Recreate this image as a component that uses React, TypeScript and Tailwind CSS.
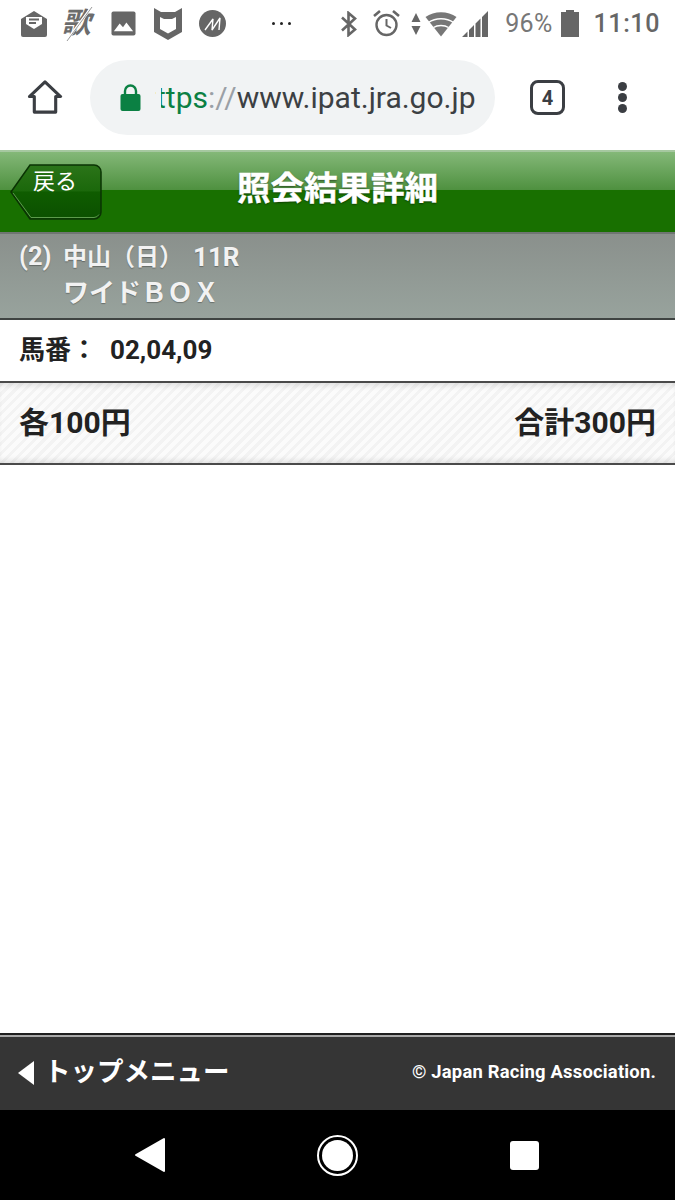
const sans = 'font-[Roboto,"Noto_Sans_CJK_JP",sans-serif]'

function StatusIcons() {
  return (
    <div className="flex items-center">
      {/* mail */}
      <svg width="28" height="28" viewBox="0 0 28 28" className="ml-[20px]">
        <path d="M14 1 L27 9 V25 a2 2 0 0 1-2 2 H3 a2 2 0 0 1-2-2 V9 Z" fill="#666" />
        <path d="M6 7 H22 V14 L14 19 L6 14 Z" fill="#fff" />
        <path d="M9 9.5 H19 M9 13 H16" stroke="#666" strokeWidth="1.8" />
      </svg>
      {/* music app badge */}
      <div className="relative ml-[15px] flex h-[36px] w-[32px] items-center justify-center">
        <span className="skew-x-[-14deg] text-[29px] leading-none font-bold text-[#6c6c6c]">歌</span>
        <svg width="32" height="36" viewBox="0 0 32 36" className="absolute top-0 left-0">
          <path d="M28 2 L4 34" stroke="#fff" strokeWidth="2.5" />
          <path d="M29 1 L4 35" stroke="#999" strokeWidth="1" />
        </svg>
      </div>
      {/* picture */}
      <svg width="25" height="25" viewBox="0 0 26 26" className="ml-[16px]">
        <rect x="0.5" y="0.5" width="25" height="25" rx="2" fill="#666" />
        <path d="M3 21 L9 13 L12.5 17 L16 12 L23 21 Z" fill="#fff" />
      </svg>
      {/* shield */}
      <svg width="28" height="32" viewBox="0 0 28 32" className="ml-[18px]">
        <path d="M0 0 L7 4 H21 L28 0 V24 L14 32 L0 24 Z" fill="#666" />
        <path d="M6 9 L10 11 H18 L22 9 V21 L14 25.500 L6 21 Z" fill="#fff" />
      </svg>
      {/* M badge */}
      <div className="ml-[17px] flex size-[27px] items-center justify-center rounded-full bg-[#666]">
        <svg width="18" height="14" viewBox="0 0 18 14" fill="none" stroke="#fff" strokeWidth="1.400" strokeLinejoin="bevel">
          <path d="M1 13 L9 2 L8 13 L16 1 L15 13" />
        </svg>
      </div>
      <div className="ml-[46px] flex gap-[5px]">
        <span className="size-[3px] rounded-full bg-[#222]" />
        <span className="size-[3px] rounded-full bg-[#222]" />
        <span className="size-[3px] rounded-full bg-[#222]" />
      </div>
    </div>
  )
}

function SystemIcons() {
  return (
    <div className="flex items-center">
      {/* bluetooth */}
      <svg width="18" height="26" viewBox="0 0 18 26" fill="none" stroke="#666" strokeWidth="2.600">
        <path d="M2 6.500 L15 18.500 L8.500 24 V2 L15 7.500 L2 19.500" />
      </svg>
      {/* alarm */}
      <svg width="27" height="27" viewBox="0 0 27 27" fill="none" stroke="#666" className="ml-[15px]">
        <circle cx="13.500" cy="15" r="10" strokeWidth="2.400" />
        <path d="M13.500 9 V15.500 L18 18" strokeWidth="2" />
        <path d="M1 6 L7 1 M26 6 L20 1" strokeWidth="2.600" />
      </svg>
      {/* data arrows */}
      <svg width="10" height="24" viewBox="0 0 9 24" fill="#666" className="ml-[11px]">
        <path d="M4.500 1 L9 10 H0 Z M0 14 H9 L4.500 23 Z" />
      </svg>
      {/* wifi: a solid fan cut by two white arcs */}
      <svg width="32" height="26" viewBox="0 0 32 26" fill="none" className="ml-[4px]">
        <path d="M0.500 6 C9 -0.500 23 -0.500 31.500 6 L16 25.500 Z" fill="#777" />
        <path d="M3.500 11.500 C10.500 6.500 21.500 6.500 28.500 11.500" stroke="#fff" strokeWidth="1.500" />
        <path d="M8.500 16.500 C12.500 13.800 19.500 13.800 23.500 16.500" stroke="#fff" strokeWidth="1.500" />
      </svg>
      {/* signal */}
      <svg width="27" height="26" viewBox="0 0 27 26" fill="#666" className="ml-[5px]">
        <path d="M0 26 L5.500 20.500 V26 Z M7 19 L12 14 V26 H7 Z M13.500 12.500 L18.500 7.500 V26 H13.500 Z M20 6 L26 0 V26 H20 Z" />
      </svg>
      <span className="ml-[16px] text-[25px] leading-none tracking-[0.3px] text-[#777]">96%</span>
      {/* battery */}
      <svg width="18" height="27" viewBox="0 0 18 27" fill="#666" className="ml-[8px]">
        <path d="M5 0 H13 V2 H18 V27 H0 V2 H5 Z" />
      </svg>
      <span className="ml-[15px] text-[25px] leading-none font-medium tracking-[0.6px] text-[#666]">11:10</span>
    </div>
  )
}

function Toolbar() {
  return (
    <div className="flex h-[103px] items-center pb-[2px]">
      <svg width="36" height="35" viewBox="0 0 36 36" fill="none" stroke="#3b3e43" strokeWidth="3.200" strokeLinejoin="round" className="ml-[27px]">
        <path d="M2 17 L18 2 L34 17 H29 V33 H7 V17 Z" />
      </svg>
      <div className="ml-[27px] flex h-[75px] w-[405px] items-center rounded-full bg-[#f1f3f4]">
        <svg width="21" height="30" viewBox="0 0 21 30" fill="none" className="ml-[30px]">
          <path d="M5 12 V8 a5.500 5.500 0 0 1 11 0 V12" stroke="#0b8043" strokeWidth="2.400" />
          <rect x="0.500" y="11" width="20" height="17" rx="2" fill="#0b8043" />
        </svg>
        {/* the address is scrolled, so the pill's colour lies over the front of the scheme */}
        <div className="relative ml-[15px] text-[30px] leading-[36px] whitespace-nowrap">
          <span className="text-[#0b8043]">ttps</span>
          <span className="text-[#9aa0a6]">://</span>
          <span className="text-[#3c4043]">www.ipat.jra.go.jp</span>
          <span className="absolute top-0 left-0 h-full w-[5px] bg-[#f1f3f4]" />
        </div>
      </div>
      <div className="ml-[35px] flex size-[35px] items-center justify-center rounded-[8px] border-[3px] border-[#3b3e43] text-[20px] leading-none font-bold text-[#3b3e43]">
        4
      </div>
      <div className="ml-[53px] flex flex-col gap-[2px]">
        <span className="size-[9px] rounded-full bg-[#3b3e43]" />
        <span className="size-[9px] rounded-full bg-[#3b3e43]" />
        <span className="size-[9px] rounded-full bg-[#3b3e43]" />
      </div>
    </div>
  )
}

function BackButton() {
  return (
    <div className="relative flex h-[56px] w-[92px] items-start">
      <svg width="92" height="56" viewBox="0 0 92 56" className="absolute top-0 left-0">
        <defs>
          <linearGradient id="back" x1="0" y1="0" x2="0" y2="1">
            <stop offset="0" stopColor="#2b7419" />
            <stop offset="0.48" stopColor="#1b680b" />
            <stop offset="0.5" stopColor="#0f5c00" />
            <stop offset="1" stopColor="#0b5000" />
          </linearGradient>
        </defs>
        <path d="M1 28 L20 1 H84 a7 7 0 0 1 7 7 V48 a7 7 0 0 1-7 7 H20 Z" fill="url(#back)" stroke="#0a3303" strokeWidth="1.500" />
        <path d="M3 29 L21 53.500 H84 a6 6 0 0 0 5-3" fill="none" stroke="#5c9a4c" strokeWidth="1" />
      </svg>
      <span className="relative mt-[5px] ml-[23px] text-[22px] leading-[26px] text-white">戻る</span>
    </div>
  )
}

export default function App() {
  return (
    <div className={`flex h-[1200px] w-[675px] flex-col overflow-hidden bg-white ${sans}`}>
      <div className="flex h-[47px] items-center justify-between pr-[15px]">
        <StatusIcons />
        <SystemIcons />
      </div>
      <Toolbar />

      <header className="relative flex h-[84px] items-center border-t-2 border-b-2 border-t-[#a6c8a0] border-b-[#6f7572] bg-[linear-gradient(#84b878_0%,#4f9140_47%,#187000_47%,#187000_100%)] pl-[10px]">
        <BackButton />
        <h1 className="absolute inset-x-0 top-[17px] text-center text-[33.500px] leading-[40px] font-bold text-white [-webkit-text-stroke:0.4px_white] [text-shadow:0_1px_2px_rgba(0,0,0,0.5)]">
          照会結果詳細
        </h1>
      </header>

      <section className="h-[86px] border-b-2 border-[#3f4442] bg-[linear-gradient(#8a908c,#98a39d)] pt-[5px] pl-[19px] font-bold text-[#f2f2f2]">
        <div className="flex h-[35px] items-center text-[24px] leading-none [text-shadow:0_1px_1px_rgba(0,0,0,0.3)]">
          <span className="w-[44px] text-[25.500px]">(2)</span>
          <span>中山（日）</span>
          <span className="ml-[10px] text-[26px]">11R</span>
        </div>
        <div className="mt-[1px] flex h-[35px] items-center pl-[44px] text-[26px] leading-none [text-shadow:0_1px_1px_rgba(0,0,0,0.3)]">
          ワイドＢＯＸ
        </div>
      </section>

      <div className="flex h-[63px] items-center border-b-2 border-[#4a4a4a] pl-[19px] text-[26px] font-bold text-[#222]">
        <span className="w-[91px]">馬番：</span>
        <span>02,04,09</span>
      </div>

      <div className="flex h-[82px] items-center justify-between border-b-2 border-[#4a4a4a] bg-[repeating-linear-gradient(135deg,#f3f3f3_0px,#f3f3f3_3px,#fbfbfb_3px,#fbfbfb_7px)] px-[19px] pb-[1px] text-[30px] font-bold text-[#222] shadow-[inset_0_6px_6px_-4px_rgba(0,0,0,0.12),inset_0_-6px_6px_-4px_rgba(0,0,0,0.12)]">
        <span>各100円</span>
        <span>合計300円</span>
      </div>

      <main className="flex-1" />

      <footer className="flex h-[77px] items-center justify-between border-t-2 border-t-[#1f1f1f] bg-[#353535] pr-[19px] pl-[18px] text-white shadow-[inset_0_2px_0_#a8a8a8]">
        <div className="flex items-center">
          <span className="h-0 w-0 border-y-[12px] border-r-[16px] border-y-transparent border-r-white" />
          <span className="ml-[10px] text-[26.500px] leading-none font-bold">トップメニュー</span>
        </div>
        <span className="text-[18.400px] leading-none font-bold tracking-[0.2px]">© Japan Racing Association.</span>
      </footer>

      <nav className="flex h-[90px] items-center bg-black">
        <svg width="32" height="36" viewBox="0 0 32 36" fill="#fff" stroke="#fff" strokeWidth="2" strokeLinejoin="round" className="ml-[134px]">
          <path d="M2 18 L30 2 V34 Z" />
        </svg>
        <div className="ml-[151px] flex size-[41px] items-center justify-center rounded-full border-[2px] border-white">
          <span className="size-[31px] rounded-full bg-white" />
        </div>
        <span className="ml-[152px] size-[29px] rounded-[3px] bg-white" />
      </nav>
    </div>
  )
}
